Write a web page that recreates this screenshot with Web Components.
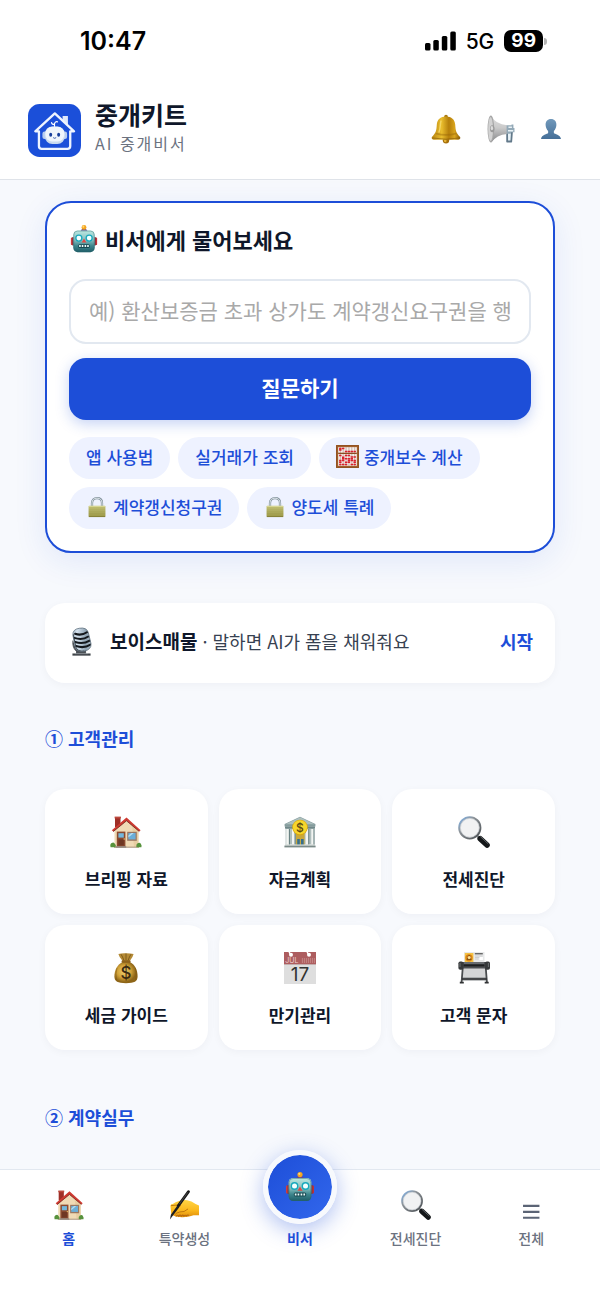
<!DOCTYPE html>
<html lang="ko">
<head>
<meta charset="utf-8">
<meta name="viewport" content="width=device-width, initial-scale=1">
<title>중개키트</title>
<style>
  :root {
    --blue: #1d4ed8;
    --blue-soft: #eef2ff;
    --ink: #0f172a;
    --muted: #6b7280;
    --line: #e2e8f0;
    --page: #f7f9fd;
    --sans: "Noto Sans CJK KR", "Noto Sans", sans-serif;
  }

  body {
    margin: 0;
    background: var(--page);
    color: var(--ink);
    font-family: var(--sans);
  }
</style>
</head>
<body>
<kit-app></kit-app>

<script>
// All drawings share a 32x32 box
const ICONS = {
  logo: `
    <rect width="32" height="32" rx="7" fill="#1b4fd9"/>
    <path d="M20.900 10.500V7.200h3.200v6.200z" fill="#dfe9fb"/>
    <path d="M6.600 16.500H4.400L16.200 5.700l11.600 10.800h-2.300v8.900a1.700 1.700 0 0 1-1.700 1.700H8.300a1.700 1.700 0 0 1-1.700-1.700z" fill="#1b4fd9" stroke="#eef4ff" stroke-width="1.400" stroke-linejoin="round"/>
    <path d="M16 14v-2.200M16 12.400c-1.600 0-1.800-.8-1.800-1.200M16 12c.2-1.200 1-1.500 1.800-1.200" fill="none" stroke="#fff" stroke-width=".7" stroke-linecap="round"/>
    <rect x="8.700" y="16.600" width="3" height="4.600" rx="1.300" fill="#b9cdee"/>
    <rect x="20.600" y="16.600" width="3" height="4.600" rx="1.300" fill="#b9cdee"/>
    <rect x="10.100" y="13.600" width="12.200" height="10.500" rx="4.600" fill="#c9daf0"/>
    <rect x="10.500" y="13.800" width="11.400" height="8.800" rx="4" fill="#eff5fc"/>
    <ellipse cx="13.700" cy="18.600" rx=".9" ry="1.200" fill="#173f9c"/>
    <ellipse cx="18.500" cy="18.600" rx=".9" ry="1.200" fill="#173f9c"/>
    <path d="M15.200 20.300q.9.800 1.800 0" fill="none" stroke="#173f9c" stroke-width=".5"/>`,
  bell: `
    <defs><linearGradient id="g"><stop offset="0" stop-color="#b98510"/><stop offset=".35" stop-color="#e9bd2d"/><stop offset=".6" stop-color="#b57f0b"/><stop offset=".8" stop-color="#d9a41c"/><stop offset="1" stop-color="#8d5d05"/></linearGradient></defs>
    <circle cx="16" cy="28" r="3.400" fill="#a66f0a"/>
    <circle cx="15.200" cy="28.600" r="1.400" fill="#e5b537"/>
    <rect x="14" y=".8" width="4" height="4" rx="2" fill="#a9780f"/>
    <path d="M16 2.600c6 0 9.400 3.400 9.800 8.600.4 6.400.8 9 5.200 13.200 1 1.400-.4 2.600-2.200 3H3.200C1.400 27 0 25.800 1 24.400c4.400-4.200 4.800-6.800 5.200-13.200.4-5.200 3.800-8.600 9.800-8.600z" fill="url(#g)"/>
    <path d="M5.600 20q10.400 2.800 20.800 0l1 1.600q-11.400 3.200-22.800 0z" fill="#9a6808" opacity=".45"/>
    <path d="M1.400 25.600q14.600 2.600 29.200 0" fill="none" stroke="#7b5207" stroke-width="1" opacity=".6"/>
    <path d="M10.600 7.600c-1 3-.4 8-2 11.600" fill="none" stroke="#fbe27a" stroke-width="1.600" stroke-linecap="round" opacity=".7"/>`,
  megaphone: `
    <defs><linearGradient id="g" x2="0" y2="1"><stop offset="0" stop-color="#dedede"/><stop offset=".45" stop-color="#cacaca"/><stop offset="1" stop-color="#858688"/></linearGradient></defs>
    <path d="M22 16h7.500v4l-.8 10.500q-.2 1-1.200 1h-4.600q-1 0-.9-1z" fill="#62798a"/>
    <path d="M24 20.500h3.400L26.800 29h-2.700z" fill="#e9f3f8"/>
    <path d="M4.800.600Q10 11 23 11.600v10Q11 22.600 4.800 31.400z" fill="url(#g)"/>
    <path d="M22.400 11.600h5.600v-.8h2.200v4h1.200v5h-3.600l-.6 1.600h-4.800z" fill="#93a9b7"/>
    <path d="M24.500 13h4v1.800h-4zM24 17h6v1.800h-6z" fill="#e8f1f5"/>
    <ellipse cx="4.400" cy="16" rx="3.800" ry="15.500" fill="#a6a6a6"/>
    <ellipse cx="4.100" cy="16" rx="2.700" ry="13.800" fill="#d2d2d2"/>
    <ellipse cx="6" cy="15.600" rx="2.600" ry="4" fill="#9a9a9a"/>
    <ellipse cx="5.600" cy="15" rx="1.400" ry="2.400" fill="#dcdcdc"/>`,
  person: `
    <defs><linearGradient id="g" x2="0" y2="1"><stop offset="0" stop-color="#7199bb"/><stop offset="1" stop-color="#456f98"/></linearGradient></defs>
    <path d="M16 0c5.600 0 9 4 8.600 9.800-.3 4-2 7.200-4 9.200v3.400c1.200 2 10.400 2.200 11.400 9.600H0c1-7.400 10.200-7.600 11.400-9.600V19c-2-2-3.700-5.200-4-9.200C7 4 10.400 0 16 0z" fill="url(#g)"/>`,
  robot: `
    <defs><linearGradient id="g" x2="0" y2="1"><stop offset="0" stop-color="#bce9e2"/><stop offset=".45" stop-color="#83bcbd"/><stop offset=".7" stop-color="#3f878e"/><stop offset="1" stop-color="#1e5c67"/></linearGradient></defs>
    <rect x="2" y="14.500" width="4" height="8" rx="1" fill="#d33c3e"/>
    <rect x="26" y="14.500" width="4" height="8" rx="1" fill="#c22f36"/>
    <rect x="3.600" y="14" width="1.600" height="9" fill="#73323f"/>
    <rect x="26.800" y="14" width="1.600" height="9" fill="#73323f"/>
    <path d="M12.400 7.800Q12.600 5 16 5t3.600 2.800z" fill="#69458e"/>
    <circle cx="16" cy="3.600" r="2.600" fill="#f4a51f"/>
    <circle cx="15.300" cy="2.800" r="1.100" fill="#ffd774"/>
    <rect x="4.600" y="7" width="22.800" height="23" rx="4.600" fill="url(#g)"/>
    <rect x="5.100" y="7.500" width="21.800" height="22" rx="4" fill="none" stroke="#29666d" stroke-width=".8" opacity=".55"/>
    <circle cx="10.500" cy="15" r="3.900" fill="#17a9bd"/>
    <circle cx="21.500" cy="15" r="3.900" fill="#17a9bd"/>
    <circle cx="10.500" cy="15" r="2.500" fill="#f2ffff"/>
    <circle cx="21.500" cy="15" r="2.500" fill="#f2ffff"/>
    <path d="M16 15.400l2.500 4.400h-5z" fill="#e04a45"/>
    <rect x="9.800" y="21.500" width="12.400" height="4" rx="1.600" fill="#174850"/>
    <path d="M10.800 22.400h1.700v2.200h-1.700zM13.600 22.400h1.700v2.200h-1.700zM16.600 22.400h1.700v2.200h-1.700zM19.400 22.400h1.700v2.200h-1.700z" fill="#eafcfb"/>`,
  abacus: `
    <rect width="32" height="32" fill="#a3612c"/>
    <rect x="3" y="3" width="26" height="26" fill="#f6eeea"/>
    <path d="M6 3v26M10 3v26M14 3v26M18 3v26M22 3v26M26 3v26" stroke="#9a7b6d" stroke-width=".7"/>
    <path d="M3 11.600h26" stroke="#8b4c20" stroke-width="1.800"/>
    <path d="M4.300 4.800h7.400M4.300 7h3.400M12.300 9h15.400M4.300 14.500h3.400M12.300 14.500h7.400M20.300 16.800h7.400M8.300 19h15.400M4.300 21.500h7.400M16.300 21.500h11.400M4.300 24h3.400M12.300 24h7.400M24.300 24h3.400M4.300 27h11.400M20.300 27h7.400M8.300 17h3.400" stroke="#d9212c" stroke-width="2" stroke-dasharray="3.400 .6"/>
    <rect x="1" y="1" width="30" height="30" fill="none" stroke="#8a4b1e" stroke-width="1"/>`,
  lock: `
    <defs><linearGradient id="g" x2="0" y2="1"><stop offset="0" stop-color="#cac97c"/><stop offset="1" stop-color="#9a9646"/></linearGradient></defs>
    <path d="M8 16V9.500C8 5 11 1.800 16 1.800s8 3.200 8 7.700V16" fill="none" stroke="#80909a" stroke-width="3.600"/>
    <path d="M8 16V9.500C8 5 11 1.800 16 1.800s8 3.200 8 7.700V16" fill="none" stroke="#dce5e9" stroke-width="1.600"/>
    <rect x="2.500" y="14" width="27" height="18" rx="1.200" fill="url(#g)"/>
    <path d="M3 17.500h26M3 20.500h26M3 23.500h26M3 26.500h26" stroke="#8f8b43" stroke-width=".7" opacity=".5"/>
    <path d="M3 15h26" stroke="#e6e4a8" stroke-width="1"/>
    <path d="M3 31.400h26" stroke="#77702c" stroke-width="1"/>`,
  mic: `
    <defs>
      <clipPath id="c"><path d="M6.500 9Q6 2.600 13.500 1.400 21.500 0 23.500 6l3 12.500Q27 25 19 26.600 10.500 28 9 21.500z"/></clipPath>
      <linearGradient id="g"><stop offset="0" stop-color="#7b8c9a"/><stop offset=".35" stop-color="#d4e2ee"/><stop offset=".65" stop-color="#90a3b2"/><stop offset="1" stop-color="#c3d1dc"/></linearGradient>
    </defs>
    <path d="M6.500 15q-.8 9 4.500 12M10.500 25h10v5h-10z" fill="#4a4f55" stroke="#4a4f55" stroke-width="1"/>
    <path d="M6 29.200h20v2.400H6z" fill="#3e4348"/>
    <path d="M9 29.400h14" stroke="#b3b9be" stroke-width=".7"/>
    <g clip-path="url(#c)">
      <rect width="32" height="32" fill="url(#g)"/>
      <path d="M9 7.500q7 2.500 13.500-2M8 12q9 3 15.500-1.500M9 16.500q8.500 3 16-1.500M10 21q8.500 3 16-1.500" fill="none" stroke="#14181c" stroke-width="2.300" stroke-linecap="round"/>
      <path d="M6.500 8l3.500 16q3 4 9 2.500" fill="none" stroke="#2e353b" stroke-width="1.400"/>
    </g>
    <path d="M6.500 9Q6 2.600 13.500 1.400 21.500 0 23.500 6l3 12.500Q27 25 19 26.600 10.500 28 9 21.500z" fill="none" stroke="#60717f" stroke-width=".9"/>`,
  house: `
    <rect x="5" y="1" width="5.500" height="10" fill="#9f2f27"/>
    <rect x="4.600" y=".6" width="6.300" height="1.800" fill="#bd4a3e"/>
    <path d="M4.500 13.500L17 3l11.500 10.500V31h-24z" fill="#f0dab5"/>
    <path d="M22 8l6.500 6v17H24z" fill="#e3c698" opacity=".6"/>
    <path d="M1.800 14.200L16.500 1.400 30.600 14.200l-1.400 1.200L16.500 4.800 3.400 15.600z" fill="#ce3a31"/>
    <path d="M3.200 15.600L16.500 4.800l12.700 10.600" fill="none" stroke="#712019" stroke-width=".8"/>
    <rect x="6.800" y="15.600" width="8.600" height="15.400" fill="#8b4a30"/>
    <rect x="8.400" y="17.200" width="5.400" height="4.400" fill="#73b8dd"/>
    <rect x="8.400" y="23.400" width="5.400" height="6" fill="#6f3724"/>
    <circle cx="14.200" cy="23" r=".7" fill="#f0cc6a"/>
    <rect x="17.200" y="15.800" width="9.600" height="9" fill="#9b7761"/>
    <rect x="18.400" y="17" width="7.200" height="6.400" fill="#6baed8"/>
    <path d="M18.400 19.600l3-2.600h2.400l-5.400 4.600z" fill="#b5dcef"/>
    <path d="M4 30.600h25v1.200H4z" fill="#b39e86"/>
    <path d="M.6 31.200q-1-3 1-4.200 2.400-1.600 3.400 1 1.400 1 .6 3.200zM26.400 31.200q-.6-2.800 1.200-4 2.600-1.200 3.400 1 1 1 .4 3z" fill="#57923c"/>
    <path d="M5.800 30.200h10.400v1.600H5.800z" fill="#978d85"/>`,
  bank: `
    <path d="M16 .8L31.400 8v2.400H.6V8z" fill="#859c9d"/>
    <path d="M16 1.200L1.400 8.200h29.200z" fill="#adbfbe"/>
    <path d="M1.600 10.400h28.800v18H1.600z" fill="#b0bebd"/>
    <path d="M1 10.400h30v2.200H1z" fill="#70888a"/>
    <path d="M3.500 13v16M9.200 13v16M22.800 13v16M28.500 13v16" stroke="#f3f5f2" stroke-width="2.400"/>
    <path d="M5.500 13v16M11.200 13v16M24.800 13v16M30 13v16" stroke="#627a7d" stroke-width=".9"/>
    <path d="M12 18h8.600v11H12z" fill="#c9a83c"/>
    <path d="M13.200 23h2.600v6h-2.600zM17 23h2.600v6H17z" fill="#356f8f"/>
    <path d="M1 28.400h30v1.200H1z" fill="#cbd3d0"/>
    <path d="M.4 29.600h31.200v1.800H.4z" fill="#7a8a88"/>
    <circle cx="16" cy="11.600" r="7.800" fill="#d9a90e"/>
    <circle cx="16" cy="11.300" r="7" fill="#f7d62b"/>
    <text x="16" y="15.800" font-size="12" font-family="Inter, sans-serif" font-weight="500" text-anchor="middle" fill="#5d4a12">$</text>`,
  lens: `
    <defs><linearGradient id="g" x2="1" y2="1"><stop offset="0" stop-color="#7fb4ec"/><stop offset=".35" stop-color="#8e9499"/><stop offset="1" stop-color="#494e52"/></linearGradient></defs>
    <path d="M18.500 19l3.500 3.500" stroke="#8a8f94" stroke-width="2.400"/>
    <path d="M22.200 22.700l6.800 6.300" stroke="#15181a" stroke-width="5.600" stroke-linecap="round"/>
    <path d="M22.600 20.800l7.400 6.800" stroke="#5d6266" stroke-width="1" stroke-linecap="round"/>
    <circle cx="11.800" cy="11.800" r="10.600" fill="#f1f2f3" stroke="url(#g)" stroke-width="2"/>
    <circle cx="11.800" cy="11.800" r="9.400" fill="none" stroke="#c8cdd1" stroke-width=".7"/>`,
  moneybag: `
    <defs><radialGradient id="g" cx=".42" cy=".45"><stop offset="0" stop-color="#f0d271"/><stop offset=".6" stop-color="#d0a138"/><stop offset="1" stop-color="#8e6517"/></radialGradient></defs>
    <path d="M8.400 2q3.200-1 7.600-.8T23.600 2q-.6 3-3.800 7h-7.200Q9.200 5.400 8.400 2z" fill="#b58b36"/>
    <path d="M11 2.200q1.600 2.400 3 6.400M16 1.500V8M21 2.200q-1.600 2.400-3 6.400" stroke="#735014" stroke-width=".8" fill="none"/>
    <path d="M12.600 10h7.200c4.600 2 8 8 7.800 14.600-.2 5-3 6.600-11.600 6.600S4.600 29.600 4.400 24.600C4.200 18 8 12 12.600 10z" fill="url(#g)"/>
    <rect x="11.600" y="8.200" width="9" height="2.600" rx="1.200" fill="#8d611b"/>
    <path d="M7 16q-2 6-.4 12M25.400 16q2 6 .2 12" stroke="#7a5310" stroke-width=".8" fill="none" opacity=".6"/>
    <text x="16" y="26.800" font-size="17" font-family="Inter, sans-serif" font-weight="500" text-anchor="middle" fill="#3b2b12">$</text>`,
  calendar: `
    <rect width="32" height="32" fill="#dedede"/>
    <rect width="32" height="12.500" fill="#ad5d5f"/>
    <path d="M0 12.500h32" stroke="#c3bcbc" stroke-width=".5"/>
    <path d="M18.400 6v5M20.400 6v5M22.400 6v5M24.400 6v5M26.400 6v5M28.400 6v5M30.400 6v5" stroke="#cf9597" stroke-width=".7"/>
    <circle cx="7" cy="2.800" r="2" fill="#fff"/>
    <circle cx="25" cy="2.800" r="2" fill="#fff"/>
    <path d="M5 0l2 2.800M23 0l2 2.800" stroke="#fff" stroke-width="1.400"/>
    <text x="1.200" y="11" font-size="7" font-family="Inter, sans-serif" fill="#ecd0d0">JUL</text>
    <text x="16" y="28.800" font-size="19" font-family="Inter, sans-serif" text-anchor="middle" fill="#333">17</text>`,
  printer: `
    <rect x="6" y="0" width="20.500" height="12" fill="#e8e9ea"/>
    <rect x="6.800" y="1" width="8.600" height="9.500" fill="#f5c143"/>
    <circle cx="11" cy="5.800" r="3.600" fill="#d98417"/>
    <path d="M8.600 8l1.400-4.500L12 3l1.600 5z" fill="#8a5410"/>
    <circle cx="11.200" cy="5.400" r="1.500" fill="#ffe49a"/>
    <path d="M16.800 1.800h8" stroke="#333" stroke-width="1"/>
    <path d="M17 4h7.600M17 5.500h5M17 7h3.600" stroke="#b9bcbe" stroke-width=".6"/>
    <rect x="21.500" y="5" width="3.400" height="3" fill="#fff"/>
    <path d="M4 16h24.500v11H4z" fill="#d4d5d6"/>
    <path d="M4 25.500h24.500v3H4z" fill="#818487"/>
    <path d="M4.800 15L3.600 30M27.700 15l1.200 15" stroke="#494c4e" stroke-width="1.800"/>
    <path d="M1.800 30.600h4M26.700 30.600h4M4 27h25" stroke="#303234" stroke-width="1.700"/>
    <rect x="1" y="10" width="30.500" height="6.500" rx="1.600" fill="#4c4f52"/>
    <path d="M6 11h20" stroke="#8d9194" stroke-width=".9"/>
    <path d="M5.500 13.400h21" stroke="#1d1f20" stroke-width="2"/>
    <rect x=".4" y="9.400" width="5" height="8.400" rx="1.800" fill="#36393b"/>
    <rect x="27" y="9.400" width="5" height="8.400" rx="1.800" fill="#36393b"/>
    <path d="M2 11v4M30.400 11v4" stroke="#7b7f82" stroke-width=".8"/>`,
  writing: `
    <defs><linearGradient id="g" x2="0" y2="1"><stop offset="0" stop-color="#ffd545"/><stop offset=".6" stop-color="#fbb81c"/><stop offset="1" stop-color="#e08e0b"/></linearGradient></defs>
    <path d="M1.500 16.500l1 10 4.700 1.800q7 1.200 13 .2 3.600-.6 6-1.500H32V16.500l-3.600-1.700q-4.400-3.200-9-4-5-.4-8 .6-5 1.400-7.300 3.600-1.800 0-2.600 1.500z" fill="url(#g)"/>
    <path d="M2.600 16.600q5-1 9.500 0M12 16.800q-5 2.400-7 6.200M20 20.500q-3.500 3.500-8.600 3M7 25.600q1.500-2 3.600-1.800" fill="none" stroke="#bb730c" stroke-width="1" stroke-linecap="round"/>
    <path d="M7.500 28.200q1.500-2.500 2.800-.2 1.500-2.300 2.800 0 1.500-2.300 2.700-.2 1.600-1.600 2.800-.2 1.500-1.600 2.700-.4" fill="none" stroke="#b86a0c" stroke-width="1.200"/>
    <path d="M20.800 1.800L9.800 17" stroke="#171717" stroke-width="3" stroke-linecap="round"/>
    <path d="M8.800 16.800l2.200 1.600L4 27.500l-3 4 1-5z" fill="#1f1f1f"/>
    <path d="M20 2.500L11 15" stroke="#6b6b6b" stroke-width=".6"/>`,
  menu: `
    <path d="M7.500 17h17.500M7.500 23.300h17.500M7.500 29.600h17.500" stroke="#5b6475" stroke-width="2.300"/>`,
}

// Registers a class with its template under the given tag
const define = (tag, html, setup) => {
  const template = document.createElement("template");
  template.innerHTML = html;

  customElements.define(tag, class extends HTMLElement {
    constructor () {
      super();
      this.attachShadow({ mode: "open" }).append(template.content.cloneNode(true));
    }

    connectedCallback () {
      if (setup) setup(this, this.shadowRoot);
    }
  });
}

define("kit-icon", `
  <style>
    :host {
      display: inline-block;
      flex: none;
      width: var(--size, 32px);
      height: var(--size, 32px);
      font-weight: 400;
    }
    svg { display: block; width: 100%; height: 100%; overflow: visible; }
  </style>
  <svg viewBox="0 0 32 32" aria-hidden="true"></svg>
`, (host, root) => {
  root.querySelector("svg").innerHTML = ICONS[host.getAttribute("name")];
});

define("status-bar", `
  <style>
    :host {
      display: flex;
      align-items: center;
      justify-content: space-between;
      height: 82px;
      padding: 0 53px 0 80px;
      background: #fff;
      color: #000;
      font-family: Inter, sans-serif;
    }
    time { font-size: 25px; font-weight: 600; }
    .right { display: flex; align-items: center; gap: 10px; font-size: 21px; font-weight: 500; }
    .signal { width: 31px; height: 20px; }
    .battery { display: flex; align-items: center; gap: 1px; }
    .level {
      padding: 0 7px;
      border-radius: 7px;
      background: #000;
      color: #fff;
      font-size: 19px;
      font-weight: 700;
      line-height: 22px;
    }
    .tip { width: 3px; height: 7px; border-radius: 0 3px 3px 0; background: #b4b4b4; }
  </style>
  <time>10:47</time>
  <div class="right">
    <svg class="signal" viewBox="0 0 31 20" aria-hidden="true">
      <rect y="12" width="5.500" height="7.500" rx="1.500"/>
      <rect x="8.300" y="9" width="5.500" height="10.500" rx="1.500"/>
      <rect x="16.800" y="5" width="5.500" height="14.500" rx="1.500"/>
      <rect x="25.300" y=".500" width="5.500" height="19" rx="1.500"/>
    </svg>
    <span>5G</span>
    <span class="battery"><span class="level">99</span><span class="tip"></span></span>
  </div>
`);

define("app-header", `
  <style>
    :host {
      display: flex;
      align-items: center;
      gap: 14px;
      box-sizing: border-box;
      height: 98px;
      padding: 0 39px 0 28px;
      border-bottom: 1px solid #dfe3e9;
      background: #fff;
    }
    .brand { flex: 1; padding-bottom: 8px; }
    h1, p { margin: 0; }
    h1 { font-size: 25px; font-weight: 700; line-height: 32px; }
    p { color: var(--muted); font-size: 16px; line-height: 26px; letter-spacing: 2px; }
    nav { display: flex; align-items: center; gap: 26px; padding-bottom: 3px; }
    button { display: flex; padding: 0; border: 0; background: none; cursor: pointer; }
  </style>
  <kit-icon name="logo" style="--size: 53px"></kit-icon>
  <div class="brand">
    <h1>중개키트</h1>
    <p>AI 중개비서</p>
  </div>
  <nav>
    <button aria-label="알림"><kit-icon name="bell" style="--size: 30px"></kit-icon></button>
    <button aria-label="공지"><kit-icon name="megaphone" style="--size: 28px"></kit-icon></button>
    <button aria-label="내 정보"><kit-icon name="person" style="--size: 20px"></kit-icon></button>
  </nav>
`);

define("quick-chip", `
  <style>
    :host { display: block; }
    button {
      display: flex;
      align-items: center;
      gap: 5px;
      box-sizing: border-box;
      height: 42px;
      padding: 0 17px 3px;
      border: 0;
      border-radius: 21px;
      background: var(--blue-soft);
      color: var(--blue);
      font: 500 17px/26px var(--sans);
      white-space: nowrap;
      cursor: pointer;
    }
  </style>
  <button><slot name="icon"></slot><slot></slot></button>
`);

define("ask-card", `
  <style>
    :host {
      display: block;
      padding: 20px 22px 22px;
      border: 2px solid var(--blue);
      border-radius: 26px;
      background: #fff;
      box-shadow: 0 8px 32px rgba(29, 78, 216, .1);
    }
    h2 {
      display: flex;
      align-items: center;
      gap: 6px;
      margin: 0 0 24px;
      font-size: 22px;
      font-weight: 700;
      line-height: 32px;
    }
    form { display: grid; gap: 14px; margin: 0 0 17px; }
    input {
      box-sizing: border-box;
      width: 100%;
      height: 65px;
      padding: 0 18px 4px;
      border: 2px solid var(--line);
      border-radius: 17px;
      background: #fff;
      color: inherit;
      font: 400 21px/32px var(--sans);
    }
    input::placeholder { color: #a9a9a9; }
    button {
      height: 62px;
      padding: 0 18px 4px;
      border: 0;
      border-radius: 17px;
      background: var(--blue);
      box-shadow: 0 4px 14px rgba(29, 78, 216, .25);
      color: #fff;
      font: 700 21px/32px var(--sans);
      cursor: pointer;
    }
    .chips { display: flex; flex-wrap: wrap; gap: 8px; }
    .lock { padding: 0 1px; --size: 20px; }
  </style>
  <h2><kit-icon name="robot" style="--size: 30px"></kit-icon>비서에게 물어보세요</h2>
  <form onsubmit="return false">
    <input type="text" aria-label="질문" placeholder="예) 환산보증금 초과 상가도 계약갱신요구권을 행">
    <button>질문하기</button>
  </form>
  <div class="chips">
    <quick-chip>앱 사용법</quick-chip>
    <quick-chip>실거래가 조회</quick-chip>
    <quick-chip><kit-icon slot="icon" name="abacus" style="--size: 23px"></kit-icon>중개보수 계산</quick-chip>
    <quick-chip><kit-icon slot="icon" class="lock" name="lock"></kit-icon>계약갱신청구권</quick-chip>
    <quick-chip><kit-icon slot="icon" class="lock" name="lock"></kit-icon>양도세 특례</quick-chip>
  </div>
`);

define("voice-card", `
  <style>
    :host { display: block; margin-top: 50px; }
    a {
      display: flex;
      align-items: center;
      gap: 14px;
      box-sizing: border-box;
      height: 80px;
      padding: 0 22px 4px;
      border-radius: 20px;
      background: #fff;
      box-shadow: 0 2px 8px rgba(15, 23, 42, .04);
      color: #374151;
      font-size: 18px;
      line-height: 28px;
      text-decoration: none;
    }
    span { flex: 1; }
    b { color: var(--ink); font-size: 19px; font-weight: 700; }
    strong { color: var(--blue); font-weight: 700; }
  </style>
  <a href="#voice">
    <kit-icon name="mic" style="--size: 29px"></kit-icon>
    <span><b>보이스매물</b> · 말하면 AI가 폼을 채워줘요</span>
    <strong>시작</strong>
  </a>
`);

define("menu-section", `
  <style>
    :host { display: block; margin-top: 41px; padding-bottom: 12px; }
    h2 { margin: 0; color: var(--blue); font-size: 18px; font-weight: 700; line-height: 28px; }
    .grid { display: grid; grid-template-columns: repeat(3, 1fr); gap: 11px; margin-top: 37px; }
    .grid[hidden] { display: none; }
  </style>
  <h2></h2>
  <div class="grid"><slot></slot></div>
`, (host, root) => {
  root.querySelector("h2").textContent = host.getAttribute("heading");
  root.querySelector(".grid").hidden = host.children.length === 0;
});

define("menu-tile", `
  <style>
    :host { display: block; }
    a {
      display: flex;
      flex-direction: column;
      align-items: center;
      gap: 16px;
      padding: 25px 8px 22px;
      border-radius: 20px;
      background: #fff;
      box-shadow: 0 2px 8px rgba(15, 23, 42, .04);
      color: var(--ink);
      font-size: 17px;
      font-weight: 700;
      line-height: 26px;
      text-decoration: none;
    }
    .icon { display: grid; place-items: center; height: 36px; }
  </style>
  <a href="#"><span class="icon"></span><slot></slot></a>
`, (host, root) => {
  const name = host.getAttribute("icon");
  const icon = document.createElement("kit-icon");
  icon.setAttribute("name", name);
  root.querySelector("a").href = "#" + name;
  root.querySelector(".icon").replaceChildren(icon);
});

define("nav-item", `
  <style>
    :host { display: block; flex: 1; }
    a {
      display: flex;
      flex-direction: column;
      align-items: center;
      gap: 2px;
      color: var(--muted);
      font-size: 14px;
      font-weight: 500;
      line-height: 24px;
      text-decoration: none;
    }
    .icon { display: grid; justify-items: center; height: 34px; --size: 30px; }
    :host([active]) a, :host([main]) a { color: var(--blue); font-weight: 700; }
    :host([main]) .icon {
      place-items: center;
      width: 64px;
      height: 64px;
      margin-top: -40px;
      border: 5px solid var(--page);
      border-radius: 50%;
      background: linear-gradient(135deg, #1d4ed8, #3267ec) padding-box;
      box-shadow: 0 6px 22px rgba(29, 78, 216, .35);
      --size: 32px;
    }
  </style>
  <a href="#"><span class="icon"></span><slot></slot></a>
`, (host, root) => {
  const icon = document.createElement("kit-icon");
  icon.setAttribute("name", host.getAttribute("icon"));
  root.querySelector(".icon").replaceChildren(icon);
});

define("bottom-nav", `
  <style>
    :host {
      display: block;
      position: sticky;
      bottom: 0;
      border-top: 1px solid var(--line);
      background: #fff;
    }
    nav { display: flex; padding: 20px 11px 50px; }
  </style>
  <nav>
    <nav-item icon="house" active>홈</nav-item>
    <nav-item icon="writing">특약생성</nav-item>
    <nav-item icon="robot" main>비서</nav-item>
    <nav-item icon="lens">전세진단</nav-item>
    <nav-item icon="menu">전체</nav-item>
  </nav>
`);

define("kit-app", `
  <style>
    :host { display: flex; flex-direction: column; min-height: 100vh; }
    main { flex: 1; padding: 21px 45px 0; }
  </style>
  <status-bar></status-bar>
  <app-header></app-header>
  <main>
    <ask-card></ask-card>
    <voice-card></voice-card>
    <menu-section heading="① 고객관리">
      <menu-tile icon="house">브리핑 자료</menu-tile>
      <menu-tile icon="bank">자금계획</menu-tile>
      <menu-tile icon="lens">전세진단</menu-tile>
      <menu-tile icon="moneybag">세금 가이드</menu-tile>
      <menu-tile icon="calendar">만기관리</menu-tile>
      <menu-tile icon="printer">고객 문자</menu-tile>
    </menu-section>
    <menu-section heading="② 계약실무"></menu-section>
  </main>
  <bottom-nav></bottom-nav>
`);
</script>
</body>
</html>
